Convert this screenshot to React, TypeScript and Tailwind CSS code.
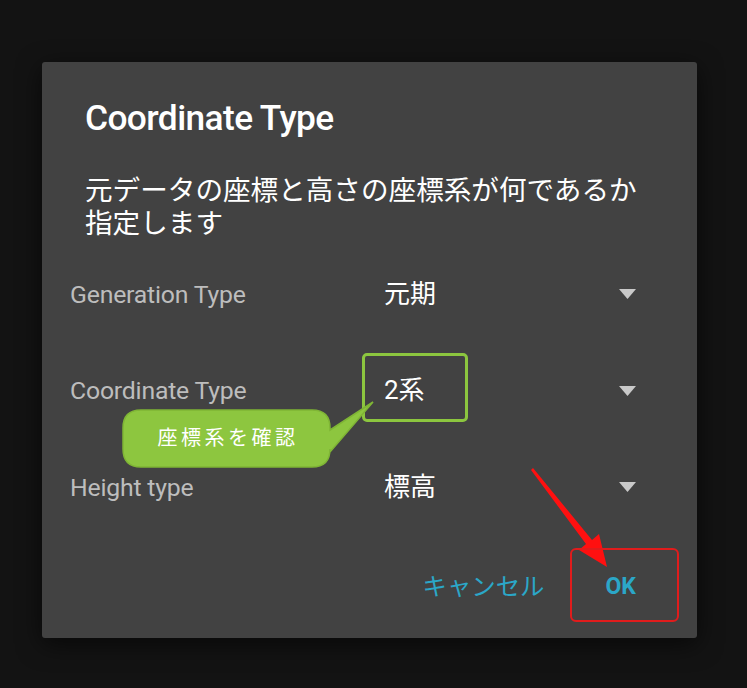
const font = { fontFamily: 'Roboto, "Noto Sans CJK JP", sans-serif' };

const rows = [
  { label: "Generation Type", value: "元期" },
  { label: "Coordinate Type", value: "2系" },
  { label: "Height type", value: "標高" },
];

const Caret = () => (
  <svg width="17" height="10" viewBox="0 0 17 10">
    <path d="M0 0 H17 L8.5 10 Z" fill="#c9c9c9" />
  </svg>
);

export default function App() {
  return (
    <div className="relative w-full h-[688px] bg-[#131313] overflow-hidden" style={font}>
      {/* dialog */}
      <div className="ml-[42px] pt-[62px]">
        <div className="w-[655px] h-[576px] bg-[#424242] rounded-[3px] shadow-[0_6px_24px_rgba(0,0,0,0.6)] flex flex-col">
          <h1 className="pt-[37px] pl-[43px] text-[35.3px] leading-[38px] font-medium text-white tracking-[-0.6px]">
            Coordinate Type
          </h1>
          <p className="mt-[37px] pl-[43px] pr-[30px] text-[27.6px] leading-[33px] text-white">
            元データの座標と高さの座標系が何であるか
            <br />
            指定します
          </p>
          <div className="mt-[6px] flex flex-col">
            {rows.map((r) => (
              <div key={r.label} className="h-[96.5px] flex items-center pl-[28px] pr-[61px]">
                <span className="w-[314px] text-[24.8px] text-[#bdbdbd] tracking-[-0.2px]">{r.label}</span>
                <span className="flex-1 text-[26px] text-white">{r.value}</span>
                <Caret />
              </div>
            ))}
          </div>
          <div className="mt-[28px] h-[48px] flex items-center justify-end pr-[61px] gap-[61px]">
            <span className="text-[24.4px] text-[#2ba7c8]">キャンセル</span>
            <span className="text-[23px] font-bold text-[#2ba7c8]">OK</span>
          </div>
        </div>
      </div>

      {/* annotations */}
      <div className="absolute left-[362px] top-[353px] w-[106px] h-[69px] border-[3px] border-[#8cc63f] rounded-[5px]" />
      <svg className="absolute left-0 top-0 pointer-events-none" width="747" height="688" viewBox="0 0 747 688">
        <path
          d="M141 410 H312 Q330 410 330 428 V430 L373 402 L330 452 V449 Q330 467 312 467 H141 Q123 467 123 449 V428 Q123 410 141 410 Z"
          fill="#8dc63f"
          stroke="#7fb535"
          strokeWidth="1.5"
        />
        <path
          d="M531 470 L586 544 L579 550 L607 567 L599 534 L592 540 L533 468 Z"
          fill="#ff1010"
        />
      </svg>
      <div
        className="absolute left-[228px] top-[438px] -translate-x-1/2 -translate-y-1/2 text-[20px] tracking-[3.5px] text-white whitespace-nowrap"
      >
        座標系を確認
      </div>
      <div className="absolute left-[570px] top-[548px] w-[109px] h-[74px] border-[2.5px] border-[#e01c1c] rounded-[6px]" />
    </div>
  );
}
